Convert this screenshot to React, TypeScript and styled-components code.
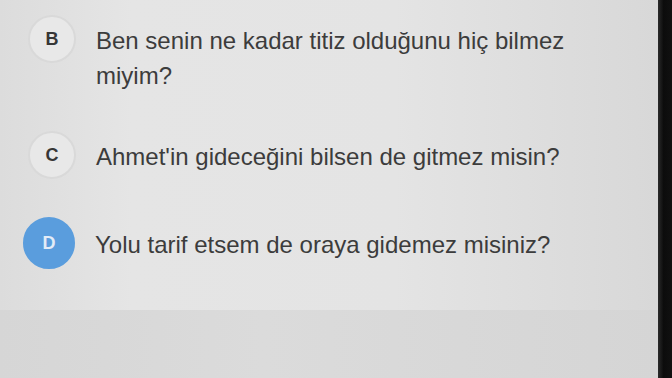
import React from "react";
import styled, { createGlobalStyle } from "styled-components";

const GlobalStyle = createGlobalStyle`
  html, body {
    margin: 0;
    padding: 0;
    width: 672px;
    height: 378px;
    overflow: hidden;
    background: #111;
  }
  * {
    box-sizing: border-box;
  }
`;

const Page = styled.div`
	display: flex;
	width: 672px;
	height: 378px;
	font-family: "Liberation Sans", Arial, sans-serif;
`;

const Screen = styled.div`
	flex: 1;
	display: flex;
	flex-direction: column;
	background: linear-gradient(90deg, #dcdcdc 0%, #e5e5e5 20%, #e4e4e4 60%, #d8d8d8 100%);
`;

const Bezel = styled.div`
	width: 14px;
	background: linear-gradient(90deg, #2a2a2a 0%, #0c0c0c 40%, #111 100%);
`;

const OptionList = styled.div`
	flex: 1;
	display: flex;
	flex-direction: column;
	gap: 38px;
	padding: 15px 0 0 28px;
`;

const Option = styled.div<{ $multiline?: boolean }>`
	display: flex;
	align-items: ${(props) => (props.$multiline ? "flex-start" : "center")};
	gap: 20px;
`;

const Badge = styled.div<{ $selected?: boolean }>`
	flex: none;
	width: ${(props) => (props.$selected ? "52px" : "48px")};
	height: ${(props) => (props.$selected ? "52px" : "48px")};
	margin-left: ${(props) => (props.$selected ? "-5px" : "0")};
	border-radius: 50%;
	display: flex;
	align-items: center;
	justify-content: center;
	font-size: 18px;
	font-weight: bold;
	color: ${(props) => (props.$selected ? "#e3ecf7" : "#363636")};
	background: ${(props) => (props.$selected ? "#5a9ddd" : "#e8e8e8")};
	border: 2px solid ${(props) => (props.$selected ? "#5a9ddd" : "#d9d9d9")};
`;

const Label = styled.div<{ $multiline?: boolean }>`
	font-size: 24px;
	line-height: 35px;
	color: #3c3c3c;
	padding-top: ${(props) => (props.$multiline ? "8px" : "3px")};
	max-width: 480px;
`;

const Footer = styled.div`
	height: 68px;
	background: linear-gradient(90deg, #d6d6d6 0%, #dbdbdb 40%, #d5d5d5 100%);
`;

const options = [
	{ key: "B", text: "Ben senin ne kadar titiz olduğunu hiç bilmez miyim?", multiline: true },
	{ key: "C", text: "Ahmet'in gideceğini bilsen de gitmez misin?" },
	{ key: "D", text: "Yolu tarif etsem de oraya gidemez misiniz?", selected: true },
];

const App = () => {
	return (
		<Page>
			<GlobalStyle />
			<Screen>
				<OptionList>
					{options.map((o) => (
						<Option key={o.key} $multiline={o.multiline}>
							<Badge $selected={o.selected}>{o.key}</Badge>
							<Label $multiline={o.multiline}>{o.text}</Label>
						</Option>
					))}
				</OptionList>
				<Footer />
			</Screen>
			<Bezel />
		</Page>
	);
};

export default App;
